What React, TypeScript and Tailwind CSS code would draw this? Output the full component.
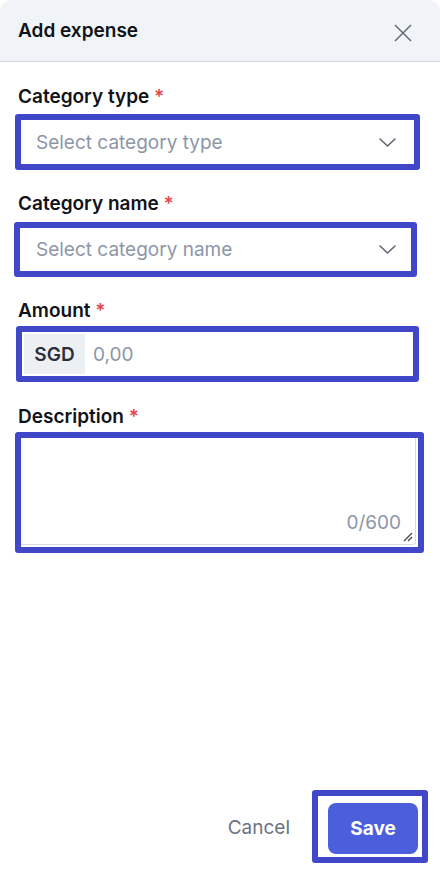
import React from "react";

const Label = ({ text, className }: { text: string; className: string }) => (
  <div className={`pl-[18px] pt-[1px] h-[24px] text-[19px] leading-[24px] font-semibold text-[#111318] ${className}`}>
    {text} <span className="text-[#e5484d]">*</span>
  </div>
);

const Chevron = () => (
  <svg width="17" height="9" viewBox="0 0 17 9" fill="none">
    <polyline points="1,1 8.5,8 16,1" stroke="#5f6673" strokeWidth="1.6" strokeLinecap="round" strokeLinejoin="round" />
  </svg>
);

export default function App() {
  return (
    <div
      className="w-[440px] h-[874px] bg-white flex flex-col rounded-t-[12px] overflow-hidden"
      style={{ fontFamily: "Inter, 'Noto Sans', sans-serif" }}
    >
      <div className="h-[62px] shrink-0 bg-[#f0f3f8] border-b border-[#cfd4df] flex items-center justify-between pl-[18px] pr-[27px]">
        <div className="text-[19px] font-semibold text-[#111318] leading-[24px]">Add expense</div>
        <svg className="mt-[4px]" width="20" height="20" viewBox="0 0 20 20" fill="none">
          <line x1="2" y1="2" x2="18" y2="18" stroke="#5f6673" strokeWidth="1.5" />
          <line x1="18" y1="2" x2="2" y2="18" stroke="#5f6673" strokeWidth="1.5" />
        </svg>
      </div>

      <div className="flex-1 flex flex-col">
        <Label text="Category type" className="mt-[22px]" />
        <div className="mt-[6px] ml-[15px] w-[405px] h-[56px] border-[6px] border-[#4047c9] rounded-[3px] flex items-center justify-between pl-[15px] pr-[18px]">
          <span className="mt-[2px] text-[19px] text-[#8d96a7]">Select category type</span>
          <Chevron />
        </div>

        <Label text="Category name" className="mt-[21px]" />
        <div className="mt-[7px] ml-[14px] w-[403px] h-[55px] border-[6px] border-[#4047c9] rounded-[3px] flex items-center justify-between pl-[16px] pr-[15px]">
          <span className="mt-[2px] text-[19px] text-[#8d96a7]">Select category name</span>
          <Chevron />
        </div>

        <Label text="Amount" className="mt-[21px]" />
        <div className="mt-[4px] ml-[16px] w-[403px] h-[56px] border-[6px] border-[#4047c9] rounded-[3px] p-[2px] flex items-stretch">
          <div className="w-[61px] pt-[2px] bg-[#edf0f3] flex items-center justify-center text-[19px] font-semibold text-[#2a2f3a]">
            SGD
          </div>
          <div className="flex items-center pt-[2px] pl-[8px] text-[19px] text-[#8d96a7]">0,00</div>
        </div>

        <Label text="Description" className="mt-[22px]" />
        <div className="mt-[4px] ml-[15px] w-[409px] h-[121px] border-[6px] border-[#4047c9] rounded-[3px] flex">
          <div className="relative flex-1 mr-[2px] mb-[2px] border-b border-r border-[#d7dbe3] rounded-br-[4px]">
            <div className="absolute right-[14px] bottom-[10px] text-[19px] leading-[22px] text-[#8d96a7]">0/600</div>
            <svg className="absolute right-[2px] bottom-[2px]" width="10" height="10" viewBox="0 0 10 10" fill="none">
              <line x1="1" y1="9" x2="9" y2="1" stroke="#444" strokeWidth="1.2" />
              <line x1="5" y1="9" x2="9" y2="5" stroke="#444" strokeWidth="1.2" />
            </svg>
          </div>
        </div>
      </div>

      <div className="flex justify-end items-center pr-[12px] pb-[11px] gap-[22px]">
        <span className="mt-[3px] text-[19px] text-[#6b7280]">Cancel</span>
        <div className="w-[116px] h-[73px] border-[6px] border-[#4047c9] rounded-[3px] pt-[7px] pb-[3px] pl-[10px] pr-[4px]">
          <div className="w-full h-full pt-[1px] bg-[#4b5fdc] rounded-[8px] flex items-center justify-center text-[19px] font-bold text-white">
            Save
          </div>
        </div>
      </div>
    </div>
  );
}
